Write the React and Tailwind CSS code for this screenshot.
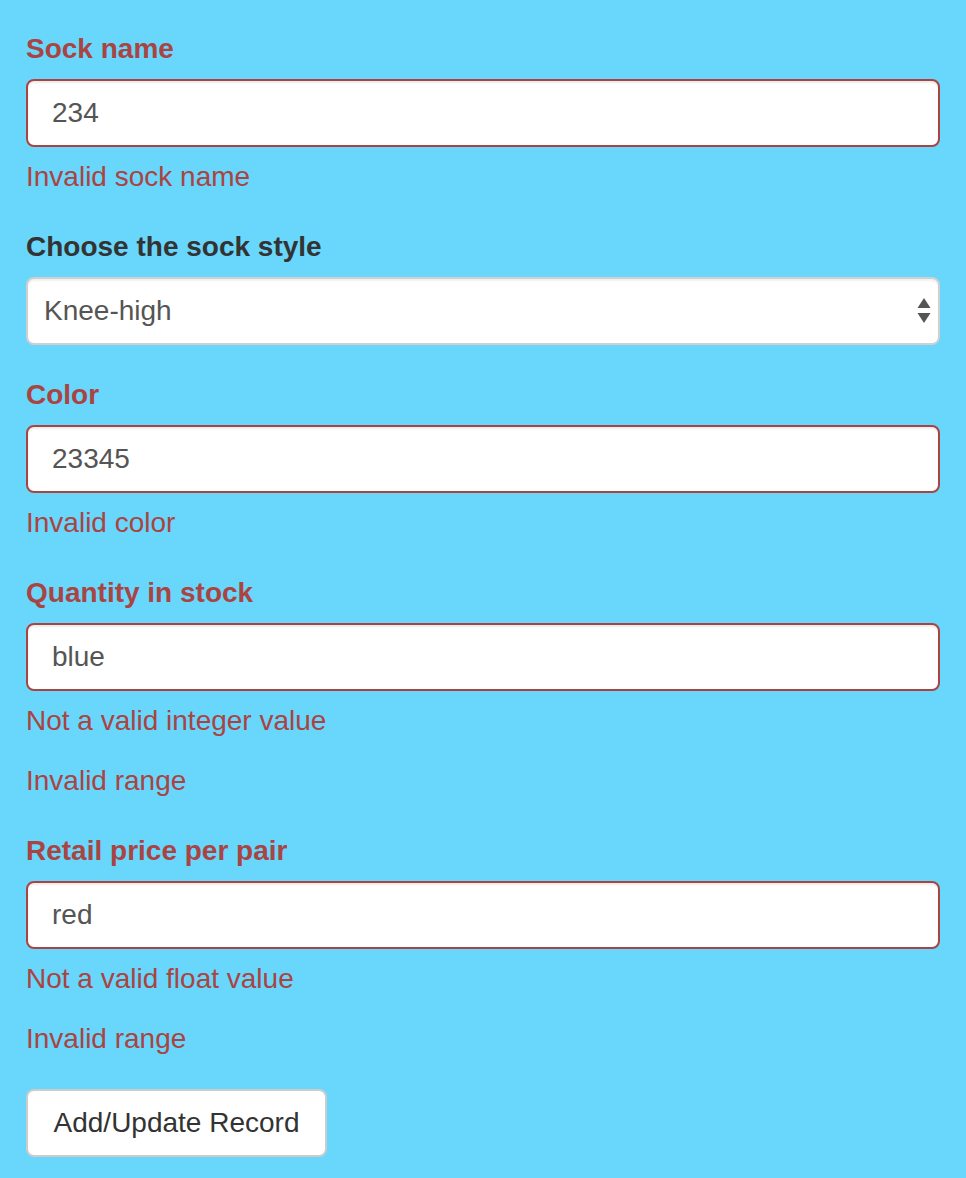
import { useState } from 'react';

const font = { fontFamily: '"Liberation Sans", Arial, sans-serif' };

function Field({ label, value, errors = [], onChange }) {
  const hasError = errors.length > 0;
  return (
    <div className="mb-[30px]">
      <label
        className={`block font-bold text-[28px] leading-[40px] mb-[10px] ${hasError ? 'text-[#a94442]' : 'text-[#333]'}`}
      >
        {label}
      </label>
      <input
        type="text"
        value={value}
        onChange={(e) => onChange(e.target.value)}
        className={`block w-full h-[68px] px-[24px] text-[28px] text-[#555] bg-white rounded-[8px] border-2 outline-none shadow-[inset_0_2px_2px_rgba(0,0,0,0.075)] ${hasError ? 'border-[#a94442]' : 'border-[#ccc]'}`}
      />
      {errors.map((err, i) => (
        <p key={i} className="text-[#a94442] text-[28px] leading-[40px] mt-[10px] mb-[20px] last:mb-0">
          {err}
        </p>
      ))}
    </div>
  );
}

export default function App() {
  const [name, setName] = useState('234');
  const [style, setStyle] = useState('Knee-high');
  const [color, setColor] = useState('23345');
  const [qty, setQty] = useState('blue');
  const [price, setPrice] = useState('red');

  return (
    <div className="min-h-screen bg-[#69d6fb] px-[26px] pt-[29px] pb-[22px]" style={font}>
      <form onSubmit={(e) => e.preventDefault()}>
        <Field label="Sock name" value={name} onChange={setName} errors={['Invalid sock name']} />

        <div className="mb-[30px]">
          <label className="block font-bold text-[28px] leading-[40px] mb-[10px] text-[#333]">
            Choose the sock style
          </label>
          <div className="relative">
            <select
              value={style}
              onChange={(e) => setStyle(e.target.value)}
              className="block w-full h-[68px] pl-[16px] pr-[48px] text-[28px] text-[#555] bg-white rounded-[8px] border-2 border-[#d0d0d0] appearance-none outline-none shadow-[inset_0_2px_2px_rgba(0,0,0,0.06)]"
            >
              <option>Knee-high</option>
              <option>Ankle</option>
              <option>Crew</option>
              <option>No-show</option>
            </select>
            <svg
              className="absolute right-[9px] top-[20px] pointer-events-none"
              width="14"
              height="27"
              viewBox="0 0 14 27"
            >
              <path d="M7 1 L13.5 11 L0.5 11 Z" fill="#555" />
              <path d="M0.5 16 L13.5 16 L7 26 Z" fill="#555" />
            </svg>
          </div>
        </div>

        <Field label="Color" value={color} onChange={setColor} errors={['Invalid color']} />
        <Field
          label="Quantity in stock"
          value={qty}
          onChange={setQty}
          errors={['Not a valid integer value', 'Invalid range']}
        />
        <Field
          label="Retail price per pair"
          value={price}
          onChange={setPrice}
          errors={['Not a valid float value', 'Invalid range']}
        />

        <button
          type="submit"
          className="h-[68px] w-[301px] text-[28px] text-[#333] bg-white border-2 border-[#ccc] rounded-[8px]"
        >
          Add/Update Record
        </button>
      </form>
    </div>
  );
}
